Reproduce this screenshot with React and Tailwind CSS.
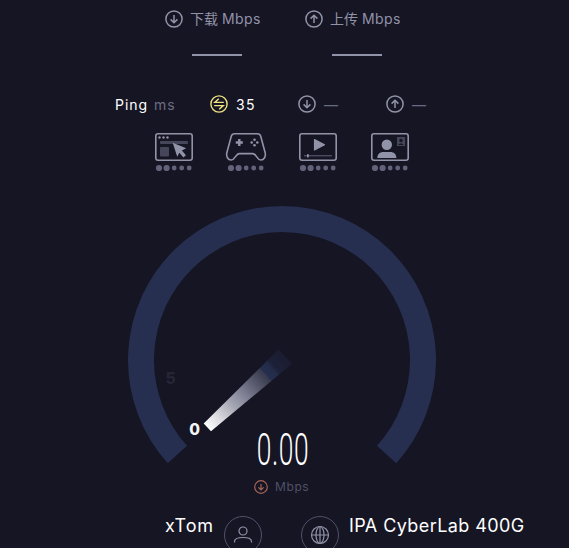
import React from "react";

function ArrowCircle({ up, size = 18, className = "" }) {
  return (
    <svg width={size} height={size} viewBox="0 0 18 18" fill="none" stroke="currentColor" strokeWidth="1.5" className={"shrink-0 " + className}>
      <circle cx="9" cy="9" r="8.1" />
      <path d={up ? "M9 13V5.2M5.6 8.6 9 5.2l3.4 3.4" : "M9 5v7.8M5.6 9.4 9 12.8l3.4-3.4"} />
    </svg>
  );
}

function IdleCircle() {
  return (
    <svg width="18" height="18" viewBox="0 0 18 18" fill="none" stroke="currentColor" strokeWidth="1.4" className="shrink-0 text-[#eee182]">
      <circle cx="9" cy="9" r="8.1" />
      <path d="M13.8 7.4H4.8L8.8 3.8M4.2 10.6h9L9.2 14.2" />
    </svg>
  );
}

function Speed({ up, label }) {
  return (
    <div className="w-[98px]">
      <div className="flex h-[18px] items-center gap-[7px]">
        <ArrowCircle up={up} />
        <span className="whitespace-nowrap text-[14px] leading-[18px]">
          {label} <span className="tracking-[0.45px]">Mbps</span>
        </span>
      </div>
      <div className="mt-[26px] ml-[27px] h-[2px] w-[50px] bg-[#9193a8]" />
    </div>
  );
}

function Dots() {
  return (
    <g fill="#62637a">
      <circle cx="4" cy="36" r="3.1" />
      <circle cx="11.6" cy="36" r="3.1" />
      <circle cx="19.2" cy="36" r="2.4" />
      <circle cx="26.7" cy="36" r="2.4" />
      <circle cx="34.2" cy="36" r="2.4" />
    </g>
  );
}

function Activity({ children }) {
  return (
    <svg width="40" height="40" viewBox="0 0 40 40" className="shrink-0 overflow-visible">
      {children}
      <Dots />
    </svg>
  );
}

function Frame() {
  return <rect x="0.8" y="1.8" width="36.4" height="26.4" rx="2.2" fill="none" stroke="#9193a8" strokeWidth="1.6" />;
}

function Gauge() {
  return (
    <svg width="308" height="260" viewBox="128 205 308 260" className="block">
      <path d="M177.4 454.5A141 141 0 1 1 386.6 454.5" fill="none" stroke="#262f4f" strokeWidth="26" />
      <defs>
        <linearGradient id="needle" gradientUnits="userSpaceOnUse" x1="207" y1="427.5" x2="285" y2="356.5">
          <stop offset="0" stopColor="#ffffff" />
          <stop offset="0.14" stopColor="#dcdce1" />
          <stop offset="0.32" stopColor="#a6a7b4" />
          <stop offset="0.45" stopColor="#858699" />
          <stop offset="0.6" stopColor="#5c5d71" />
          <stop offset="0.75" stopColor="#36384c" />
          <stop offset="0.75" stopColor="#262f4f" />
          <stop offset="0.83" stopColor="#232b49" />
          <stop offset="0.86" stopColor="#1d2138" />
          <stop offset="1" stopColor="#1a1c30" />
        </linearGradient>
      </defs>
      <path d="M203.7 423.5 278.5 349.5 292 363.8 211 431.2Z" fill="url(#needle)" />
      <text x="194.5" y="435" textAnchor="middle" fontFamily="Inter, sans-serif" fontWeight="800" fontSize="15.5" fill="#f5f5f8">0</text>
      <text x="170.5" y="384" textAnchor="middle" fontFamily="Inter, sans-serif" fontWeight="800" fontSize="15.5" fill="#252635">5</text>
    </svg>
  );
}

function RoundIcon({ children }) {
  return (
    <div className="flex size-[38px] shrink-0 items-center justify-center rounded-full border border-[#50516a]">
      <svg width="20" height="20" viewBox="0 0 20 20" fill="none" stroke="#9193a8" strokeWidth="1.2">{children}</svg>
    </div>
  );
}

export default function App() {
  return (
    <div className="h-[548px] w-[569px] overflow-hidden bg-[#161524] font-['Inter','Noto_Sans_CJK_SC',sans-serif] text-[#9193a8]">
      <div className="flex h-[95px] gap-[42px] pt-[10px] pl-[165px]">
        <Speed label="下载" />
        <Speed up label="上传" />
      </div>

      <div className="flex h-[18px] items-center pl-[115px] text-[14px]">
        <div className="flex w-[95px] gap-[6px]">
          <span className="tracking-[0.95px] text-white">Ping</span>
          <span className="text-[#6b6d85] tracking-[0.9px]">ms</span>
        </div>
        <div className="flex w-[88px] items-center gap-[8px]">
          <IdleCircle />
          <span className="tracking-[1.4px] text-white">35</span>
        </div>
        <div className="flex w-[88px] items-center gap-[8px]">
          <ArrowCircle />
          <span className="text-[#696b83]">—</span>
        </div>
        <div className="flex items-center gap-[8px]">
          <ArrowCircle up />
          <span className="text-[#696b83]">—</span>
        </div>
      </div>

      <div className="flex h-[92px] gap-[32px] pt-[19px] pl-[155px]">
        <Activity>
          <Frame />
          <circle cx="4.5" cy="5.5" r="1.2" fill="#9193a8" />
          <circle cx="8.5" cy="5.5" r="1.2" fill="#9193a8" />
          <circle cx="12.5" cy="5.5" r="1.2" fill="#9193a8" />
          <rect x="5" y="9" width="28" height="3" rx="1" fill="#454659" />
          <rect x="5" y="15" width="9" height="9.5" rx="1" fill="#454659" />
          <path d="m17.700 10.700 13.500 5.500-4.300 2.300 4 4.700-2.500 2.200-4-4.600-2.200 4Z" fill="#9193a8" />
        </Activity>
        <Activity>
          <path d="M7.500 1.800h23c2 0 2.800 1 3.300 2.700l4.300 16c1 4-1 7.500-4.300 7.500-4 0-4.500-6.400-8-6.400H12.200C8.700 21.600 8.200 28 4.200 28 .9 28-1.100 24.500-.1 20.500L4.200 4.500C4.700 2.800 5.500 1.800 7.500 1.800Z" fill="none" stroke="#9193a8" strokeWidth="1.6" />
          <path d="M12.300 7v7M8.800 10.500h7" stroke="#9193a8" strokeWidth="2.400" />
          <g fill="#9193a8">
            <circle cx="27.500" cy="7.700" r="1.300" />
            <circle cx="27.500" cy="13.300" r="1.300" />
            <circle cx="24.700" cy="10.500" r="1.300" />
            <circle cx="30.300" cy="10.500" r="1.300" />
          </g>
        </Activity>
        <Activity>
          <Frame />
          <path d="M15.500 7.500 25.500 12.700 15.500 18Z" fill="#9193a8" stroke="#9193a8" strokeWidth="1.200" strokeLinejoin="round" />
          <path d="M5 23.800h28" stroke="#62637a" strokeWidth="1" />
          <rect x="8" y="22.200" width="1.800" height="3.200" fill="#9193a8" />
        </Activity>
        <Activity>
          <Frame />
          <circle cx="15.800" cy="12.800" r="5.200" fill="#9193a8" />
          <path d="M6.300 26c0-4 2.800-6 6-6h7c3.500 0 6 2 6 6Z" fill="#9193a8" />
          <rect x="26" y="5" width="8" height="9" fill="#454659" />
          <circle cx="30" cy="8.500" r="1.700" fill="#161524" />
          <path d="M27.500 13c0-2 5-2 5 0" fill="#161524" />
        </Activity>
      </div>

      <div className="ml-[128px] h-[226px] w-[308px]">
        <Gauge />
      </div>
      <div className="flex h-[38px] w-[565px] items-center justify-center">
        <span className="inline-block w-[90px] scale-x-[0.6] text-center font-['Roboto'] text-[44px] leading-[38px] font-light tracking-[1px] text-white">0.00</span>
      </div>
      <div className="mt-[10px] flex h-[16px] items-center gap-[7px] pl-[254px]">
        <ArrowCircle size={14} className="text-[#a76657]" />
        <span className="text-[12px] leading-[16px] tracking-[0.6px] text-[#505165]">Mbps</span>
      </div>

      <div className="mt-[21px] flex h-[38px] items-start text-[18px] text-white">
        <div className="flex w-[262px] justify-end gap-[10px]">
          <span className="leading-[20px] tracking-[0.9px]">xTom</span>
          <RoundIcon>
            <circle cx="10" cy="6" r="4" />
            <path d="M1.500 17.500v-1c0-3 3.500-4 8.500-4s8.500 1 8.500 4v1" />
          </RoundIcon>
        </div>
        <div className="ml-[39px] flex gap-[10px]">
          <RoundIcon>
            <circle cx="10" cy="10" r="8.500" />
            <ellipse cx="10" cy="10" rx="4" ry="8.500" />
            <path d="M1.500 10h17M10 1.500v17" />
          </RoundIcon>
          <span className="leading-[20px] whitespace-nowrap tracking-[0.42px]">IPA CyberLab 400G</span>
        </div>
      </div>
    </div>
  );
}
